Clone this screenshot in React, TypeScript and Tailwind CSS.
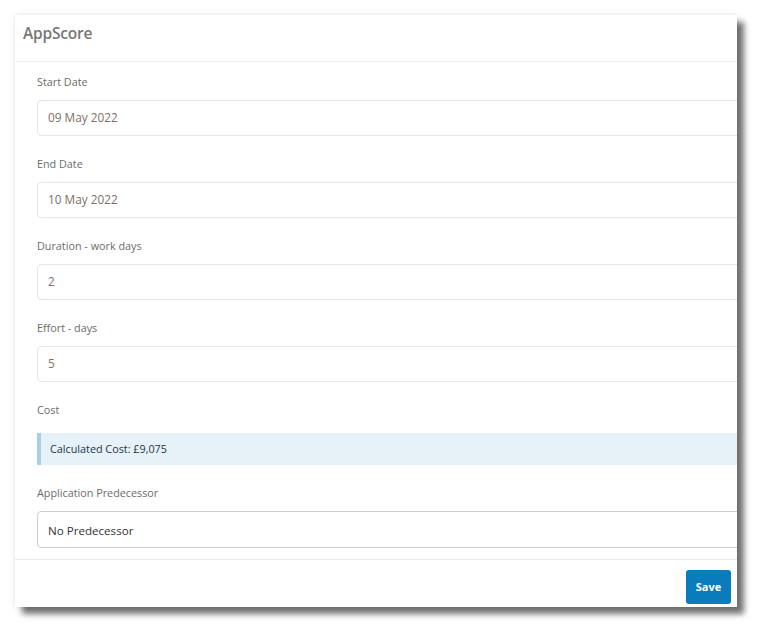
import React from 'react';

const fields = [
  { label: 'Start Date', value: '09 May 2022' },
  { label: 'End Date', value: '10 May 2022' },
  { label: 'Duration - work days', value: '2' },
  { label: 'Effort - days', value: '5' },
];

export default function App() {
  return (
    <div className="min-h-screen bg-white p-[15px] font-['Open_Sans',sans-serif]">
      <div className="w-[722px] overflow-hidden bg-white shadow-[0_0_5px_rgba(0,0,0,0.12),7px_7px_6px_rgba(0,0,0,0.55)]">
        {/* Header */}
        <div className="flex h-[47px] items-center border-b border-[#f0f0f0] pb-[8px] pl-[8px]">
          <h2 className="text-[15.5px] font-semibold text-[#777] tracking-[-0.2px]">AppScore</h2>
        </div>

        {/* Body */}
        <div className="pl-[22px] pt-[11px] pb-[11px]">
          {fields.map((f) => (
            <div key={f.label} className="mb-[19px]">
              <label className="mb-[9px] block h-[18px] text-[10.8px] leading-[18px] text-[#6b6b6b]">{f.label}</label>
              <div className="flex h-[36px] w-[760px] items-center rounded-[4px] border border-[#e6e6e6] pl-[10px] text-[11.8px] text-[#7d7068]">
                {f.value}
              </div>
            </div>
          ))}

          <div className="mb-[19px]">
            <label className="mb-[14px] block h-[18px] text-[10.8px] leading-[18px] text-[#6b6b6b]">Cost</label>
            <div className="flex h-[32px] w-[760px] items-center border-l-[4px] border-[#a7cfe6] bg-[#e6f1f8] pl-[9px] text-[10.8px] text-[#1d3646]">
              Calculated Cost: £9,075
            </div>
          </div>

          <div>
            <label className="mb-[9px] block h-[18px] text-[10.8px] leading-[18px] text-[#6b6b6b]">Application Predecessor</label>
            <div className="flex h-[37px] w-[760px] items-center rounded-[4px] border border-[#cccccc] pl-[10px] pt-[2px] text-[11.6px] text-[#333]">
              No Predecessor
            </div>
          </div>
        </div>

        {/* Footer */}
        <div className="flex justify-end border-t border-[#ebebeb] pt-[10px] pb-[3px] pr-[6px]">
          <button className="h-[34px] w-[45px] rounded-[3px] bg-[#0a7bbb] text-[11px] font-bold text-white">
            Save
          </button>
        </div>
      </div>
    </div>
  );
}
